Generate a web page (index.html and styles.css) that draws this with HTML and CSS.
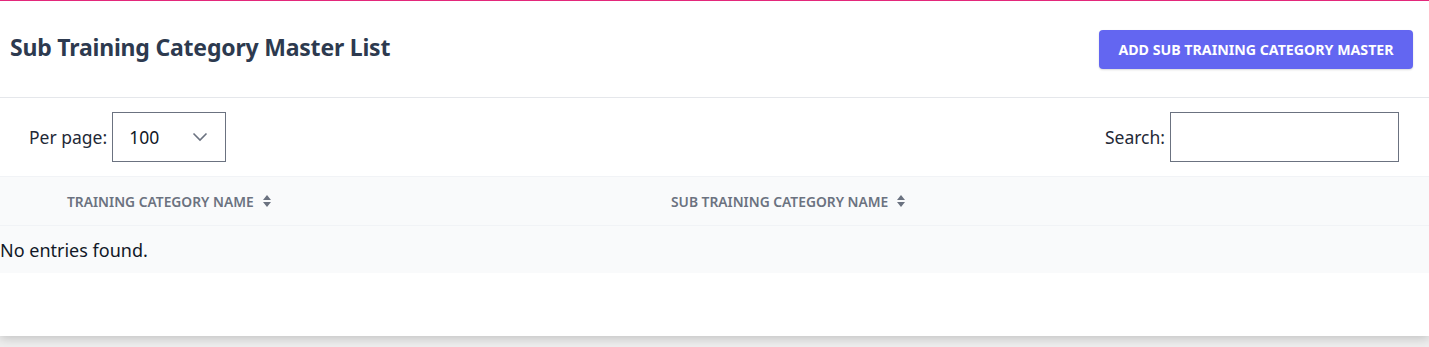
FILE: index.html
```html
<!DOCTYPE html>
<html lang="en">
<head>
<meta charset="utf-8">
<title>Sub Training Category Master List</title>
<link rel="stylesheet" href="styles.css">
</head>
<body>
<div class="card">
  <div class="header">
    <h1 class="title">Sub Training Category Master List</h1>
    <button class="btn-add">ADD SUB TRAINING CATEGORY MASTER</button>
  </div>
  <div class="toolbar">
    <label class="field">
      <span class="label">Per page:</span>
      <span class="select">
        <span class="select-value">100</span>
        <svg class="chevron" width="16" height="10" viewBox="0 0 16 10"><path d="M1.5 1.5 L8 8 L14.5 1.5" fill="none" stroke="#6b7280" stroke-width="1.6"/></svg>
      </span>
    </label>
    <label class="field">
      <span class="label">Search:</span>
      <span class="search"></span>
    </label>
  </div>
  <div class="table">
    <div class="thead">
      <div class="th"></div>
      <div class="th">TRAINING CATEGORY NAME <svg class="sort" width="8" height="12" viewBox="0 0 8 12"><path d="M4 0 L8 5 L0 5 Z M4 12 L8 7 L0 7 Z" fill="#6b7280"/></svg></div>
      <div class="th">SUB TRAINING CATEGORY NAME <svg class="sort" width="8" height="12" viewBox="0 0 8 12"><path d="M4 0 L8 5 L0 5 Z M4 12 L8 7 L0 7 Z" fill="#6b7280"/></svg></div>
    </div>
    <div class="empty">No entries found.</div>
  </div>
</div>
</body>
</html>
```
FILE: styles.css
```css
html, body {
  margin: 0;
  padding: 0;
}
body {
  background: #eeeeee;
  font-family: "Noto Sans", "Open Sans", "DejaVu Sans", sans-serif;
  color: #111827;
  height: 347px;
  overflow: hidden;
}
.card {
  background: #ffffff;
  border-top: 1px solid #e3287b;
  height: 335px;
  box-shadow: 0 2px 10px rgba(0, 0, 0, 0.2);
}
.header {
  display: flex;
  align-items: center;
  justify-content: space-between;
  height: 96px;
  padding: 0 16px 0 10px;
  border-bottom: 1px solid #e5e7eb;
}
.title {
  margin: 0;
  font-size: 23px;
  font-weight: 700;
  color: #2d3a4f;
  letter-spacing: -0.2px;
  position: relative;
  top: -2px;
}
.btn-add {
  background: #6366f1;
  color: #ffffff;
  border: none;
  border-radius: 4px;
  height: 39px;
  width: 314px;
  padding: 0;
  font-family: inherit;
  font-size: 14.2px;
  font-weight: 700;
  letter-spacing: 0;
  box-shadow: 0 1px 2px rgba(0,0,0,0.15);
}
.toolbar {
  display: flex;
  align-items: center;
  justify-content: space-between;
  padding: 14px 30px 14px 29px;
}
.field {
  display: flex;
  align-items: center;
  gap: 5px;
}
.label {
  font-size: 17.5px;
  color: #1f2937;
}
.select {
  box-sizing: border-box;
  width: 114px;
  height: 50px;
  border: 1px solid #6b7280;
  display: flex;
  align-items: center;
  justify-content: space-between;
  padding: 0 17px 0 16px;
}
.select-value {
  font-size: 17.5px;
  color: #111827;
}
.chevron {
  display: block;
}
.search {
  box-sizing: border-box;
  width: 229px;
  height: 50px;
  border: 1px solid #6b7280;
  display: block;
}
.thead {
  display: grid;
  grid-template-columns: 43px 604px 1fr;
  height: 48px;
  align-items: center;
  background: #f9fafb;
  border-top: 1px solid #f1f3f6;
  border-bottom: 1px solid #f1f3f6;
}
.th {
  padding-left: 24px;
  font-size: 13.8px;
  font-weight: 600;
  color: #6b7280;
  display: flex;
  align-items: center;
  gap: 9px;
  letter-spacing: 0;
}
.th:first-child {
  padding-left: 0;
}
.sort {
  display: block;
}
.empty {
  background: #f9fafb;
  height: 47px;
  display: flex;
  align-items: center;
  font-size: 18px;
  color: #111827;
}
```
